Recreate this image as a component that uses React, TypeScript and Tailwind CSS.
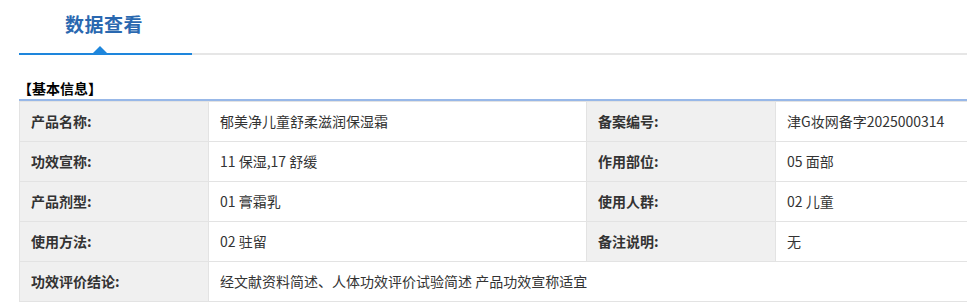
import React from "react";

const font = { fontFamily: '"Noto Sans CJK SC", "Noto Sans", sans-serif' };

type Row = [string, string, string?, string?];

const rows: Row[] = [
  ["产品名称:", "郁美净儿童舒柔滋润保湿霜", "备案编号:", "津G妆网备字2025000314"],
  ["功效宣称:", "11 保湿,17 舒缓", "作用部位:", "05 面部"],
  ["产品剂型:", "01 膏霜乳", "使用人群:", "02 儿童"],
  ["使用方法:", "02 驻留", "备注说明:", "无"],
];

export default function App() {
  return (
    <div className="w-[967px] h-[306px] overflow-hidden bg-white text-[#333]" style={font}>
      <div className="pl-[19px]">
        <div className="flex h-[55px] border-b-2 border-[#e6e6e6]">
          <div className="relative w-[173px] flex justify-center pt-[9px] -mb-[2px] border-b-2 border-[#1e86dc]">
            <span className="text-[19px] font-bold text-[#2a68b0] leading-[30px] tracking-[0.5px] -ml-[3px]">数据查看</span>
            <svg className="absolute bottom-0 left-[74px]" width="14" height="7" viewBox="0 0 14 7">
              <polygon points="0,7 7,0 14,7" fill="#1e86dc" />
            </svg>
          </div>
        </div>
        <div className="mt-[23px] text-[14px] font-bold text-black leading-[20px] -ml-[1px]">【基本信息】</div>
        <div className="mt-[1px] h-[2px] bg-[#98b8e8]" />
        <table className="w-[960px] border-collapse text-[14px] table-fixed">
          <colgroup>
            <col className="w-[189px]" />
            <col className="w-[378px]" />
            <col className="w-[189px]" />
            <col />
          </colgroup>
          <tbody>
            {rows.map((r, i) => (
              <tr key={i} className="h-[40px]">
                <td className="border border-[#e3e3e3] bg-[#f0f0f0] pl-[11px] font-bold text-[#333]">{r[0]}</td>
                <td className="border border-[#e3e3e3] pl-[11px] text-[#333]">{r[1]}</td>
                <td className="border border-[#e3e3e3] bg-[#f0f0f0] pl-[11px] font-bold text-[#333]">{r[2]}</td>
                <td className="border border-[#e3e3e3] pl-[11px] text-[#333]">{r[3]}</td>
              </tr>
            ))}
            <tr className="h-[40px]">
              <td className="border border-[#e3e3e3] bg-[#f0f0f0] pl-[11px] font-bold text-[#333]">功效评价结论:</td>
              <td colSpan={3} className="border border-[#e3e3e3] pl-[11px] text-[#333]">
                经文献资料简述、人体功效评价试验简述 产品功效宣称适宜
              </td>
            </tr>
          </tbody>
        </table>
      </div>
    </div>
  );
}
